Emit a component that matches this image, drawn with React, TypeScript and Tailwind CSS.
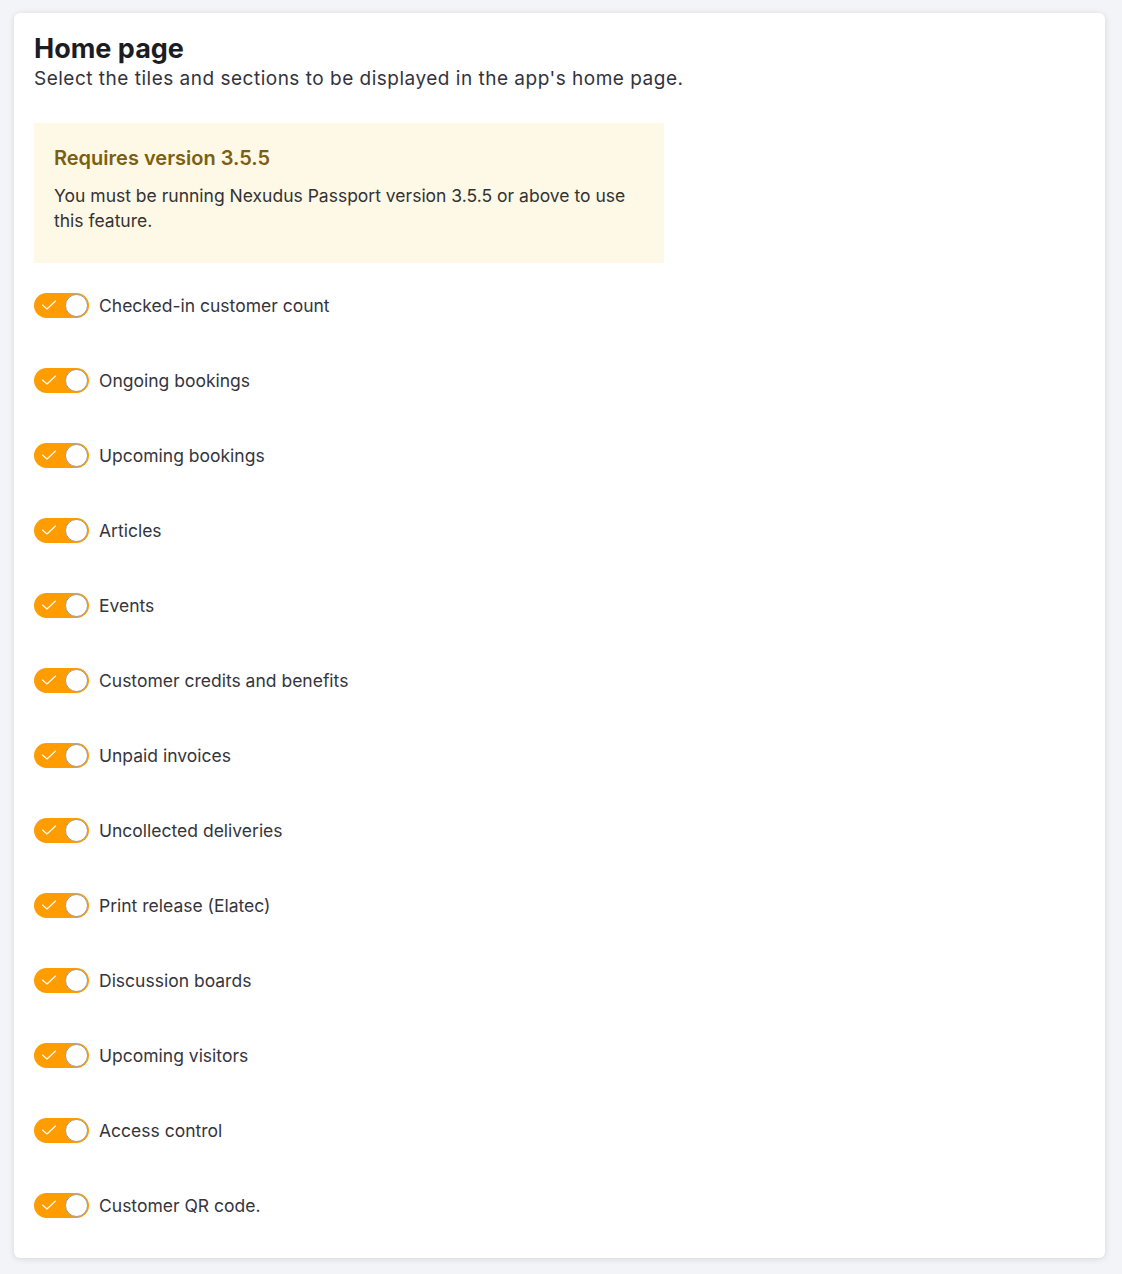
import React from 'react';

const TILES = [
  'Checked-in customer count',
  'Ongoing bookings',
  'Upcoming bookings',
  'Articles',
  'Events',
  'Customer credits and benefits',
  'Unpaid invoices',
  'Uncollected deliveries',
  'Print release (Elatec)',
  'Discussion boards',
  'Upcoming visitors',
  'Access control',
  'Customer QR code.',
];

const Toggle: React.FC<{ on: boolean; onClick: () => void }> = ({ on, onClick }) => (
  <button
    type="button"
    onClick={onClick}
    className={`relative h-[25px] w-[55px] shrink-0 rounded-full ${on ? 'bg-[#ff9c00]' : 'bg-[#d1d5db]'}`}
  >
    {on && (
      <svg viewBox="0 0 16 16" className="absolute left-[7px] top-[4px] h-[16px] w-[16px]" fill="none">
        <path d="M1.5 8 L6 12 L14.5 4" stroke="white" strokeWidth="1.1" strokeLinecap="round" strokeLinejoin="round" />
      </svg>
    )}
    <span
      className={`absolute top-[1px] h-[23px] w-[23px] rounded-full border border-[#9a9a9a] bg-white ${on ? 'right-[1px]' : 'left-[1px]'}`}
    />
  </button>
);

export default function App() {
  const [state, setState] = React.useState<boolean[]>(TILES.map(() => true));

  return (
    <div className="min-h-[1274px] bg-[#f3f4f7] pt-[13px] pl-[14px] pr-[17px] font-['Inter',sans-serif]">
      <div className="rounded-[6px] bg-white px-5 pt-[21px] pb-[40px] shadow-[0_1px_6px_rgba(0,0,0,0.12)]">
        <h1 className="text-[27px] font-bold leading-[30px] text-[#1c1c24]">Home page</h1>
        <p className="mt-[2px] text-[19px] leading-[26px] tracking-[0.5px] text-[#33333d]">
          Select the tiles and sections to be displayed in the app's home page.
        </p>

        <div className="mt-[31px] w-[630px] bg-[#fef8e6] px-5 pt-[21px] pb-[30px]">
          <h2 className="text-[20px] font-semibold leading-[28px] text-[#7b5f12]">Requires version 3.5.5</h2>
          <p className="mt-[11px] text-[17.5px] leading-[25px] text-[#333]">
            You must be running Nexudus Passport version 3.5.5 or above to use this feature.
          </p>
        </div>

        <div className="mt-[30px] flex flex-col gap-[50px]">
          {TILES.map((label, i) => (
            <div key={label} className="flex items-center gap-[10px]">
              <Toggle on={state[i]} onClick={() => setState(s => s.map((v, j) => (j === i ? !v : v)))} />
              <span className="text-[17.5px] leading-[25px] text-[#35353d]">{label}</span>
            </div>
          ))}
        </div>
      </div>
    </div>
  );
}
